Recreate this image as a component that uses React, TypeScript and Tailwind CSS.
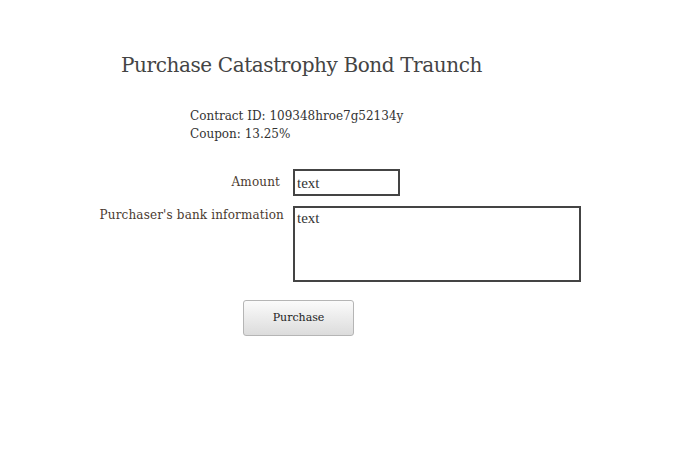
import React from 'react';

const serif = "font-['Georgia','DejaVu_Serif',serif]";

const App: React.FC = () => {
  return (
    <div className={`min-h-screen w-full bg-white text-[#3f3f3f] ${serif}`}>
      <div className="pt-[51px] pl-[121px]">
        <h1 className="text-[20px] leading-[28px] text-[#444] tracking-[-0.4px]">
          Purchase Catastrophy Bond Traunch
        </h1>
      </div>

      <div className="mt-[28px] pl-[190px] text-[12px] leading-[18px] text-[#333]">
        <p>Contract ID: 109348hroe7g52134y</p>
        <p>Coupon: 13.25%</p>
      </div>

      <form className="mt-[26px] flex flex-col gap-[10px]" onSubmit={e => e.preventDefault()}>
        <div className="flex items-start">
          <label className="w-[280px] text-right text-[12px] tracking-[0.15px] leading-[18px] pt-[4px] text-[#4a3a30]">Amount</label>
          <input
            defaultValue="text"
            className="ml-[13px] w-[107px] h-[27px] border-2 border-[#444] px-[2px] pt-[2px] text-[15px] font-['Liberation_Serif',serif] text-[#333] outline-none"
          />
        </div>
        <div className="flex items-start">
          <label className="w-[284px] text-right text-[12px] tracking-[0.15px] leading-[18px] text-[#4a3a30]">Purchaser's bank information</label>
          <textarea
            defaultValue="text"
            className="ml-[9px] w-[288px] h-[76px] border-2 border-[#444] px-[2px] pt-[1px] text-[15px] leading-[18px] font-['Liberation_Serif',serif] text-[#333] resize-none outline-none"
          />
        </div>
        <div className="pl-[243px] pt-[8px]">
          <button
            type="submit"
            className="w-[111px] h-[36px] rounded-[3px] border border-[#b5b5b5] bg-gradient-to-b from-[#fbfbfb] to-[#dcdcdc] text-[11px] text-[#222]"
          >
            Purchase
          </button>
        </div>
      </form>
    </div>
  );
};

export default App;
